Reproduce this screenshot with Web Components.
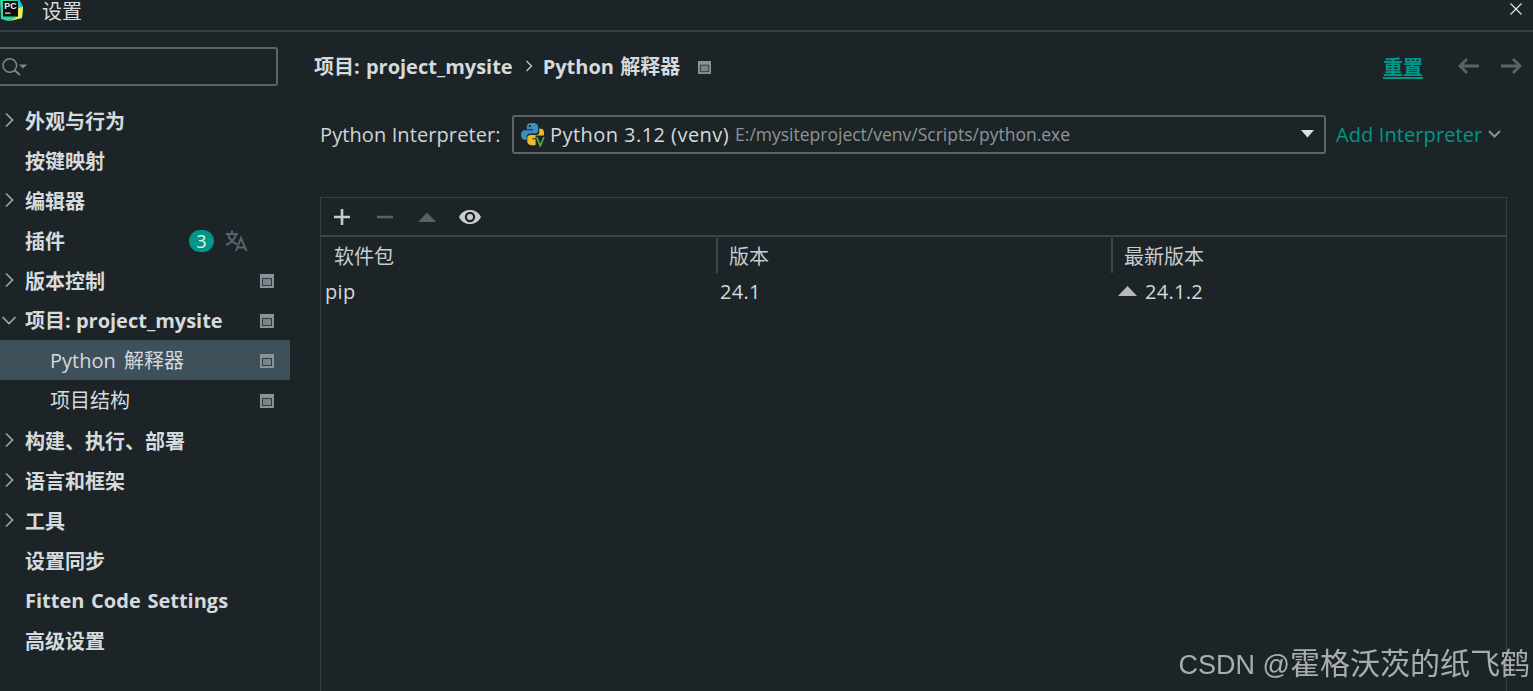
<!DOCTYPE html>
<html lang="zh">
<head>
<meta charset="utf-8">
<title>设置</title>
<style>
  html, body { margin: 0; height: 100%; background: #1c2428; overflow: hidden; }
  body { font: 20px "Open Sans", "Noto Sans CJK SC", sans-serif; color: #d4d8da; }
</style>
</head>
<body>
<settings-window>
  <title-bar slot="title">设置</title-bar>
  <side-nav slot="nav">
    <search-box></search-box>
    <nav-item arrow="right" bold>外观与行为</nav-item>
    <nav-item bold>按键映射</nav-item>
    <nav-item arrow="right" bold>编辑器</nav-item>
    <nav-item bold badge="3" translate-icon>插件</nav-item>
    <nav-item arrow="right" bold scope>版本控制</nav-item>
    <nav-item arrow="down" bold scope latin>项目: project_mysite</nav-item>
    <nav-item child selected scope latin style="word-spacing:3px">Python 解释器</nav-item>
    <nav-item child scope latin>项目结构</nav-item>
    <nav-item arrow="right" bold>构建、执行、部署</nav-item>
    <nav-item arrow="right" bold>语言和框架</nav-item>
    <nav-item arrow="right" bold>工具</nav-item>
    <nav-item bold>设置同步</nav-item>
    <nav-item bold latin style="word-spacing:1.5px">Fitten Code Settings</nav-item>
    <nav-item bold>高级设置</nav-item>
  </side-nav>
  <interpreter-panel slot="main"></interpreter-panel>
</settings-window>
<water-mark><span style="font-size:27px">CSDN @</span>霍格沃茨的纸飞鹤</water-mark>

<script>
const SCOPE_ICON = `<svg width="14" height="14" viewBox="0 0 14 14"><rect x="0" y="0" width="14" height="14" fill="#8b9194"/><rect x="2" y="4" width="10" height="8" fill="#2f3b41"/><rect x="3" y="5" width="8" height="6" fill="#78858b"/></svg>`;

class SettingsWindow extends HTMLElement {
  constructor() {
    super();
    this.attachShadow({ mode: 'open' });
    this.shadowRoot.innerHTML = `
      <style>
        :host { display: flex; flex-direction: column; height: 691px; overflow: hidden; }
        .body { display: flex; flex: 1; min-height: 0; }
        ::slotted(side-nav) { flex: 0 0 290px; }
        ::slotted(interpreter-panel) { flex: 1; min-width: 0; }
      </style>
      <slot name="title"></slot>
      <div class="body"><slot name="nav"></slot><slot name="main"></slot></div>
    `;
  }
}

class TitleBar extends HTMLElement {
  constructor() {
    super();
    this.attachShadow({ mode: 'open' });
    this.shadowRoot.innerHTML = `
      <style>
        :host { display: flex; align-items: center; height: 30px; border-bottom: 2px solid #35444c; box-sizing: content-box; position: relative; }
        svg.logo { flex: none; }
        .name { margin-left: 19px; font: 20px/22px "Liberation Sans", "Noto Sans CJK SC", sans-serif; color: #d8dcde; position: relative; top: -3px; }
        svg.close { position: absolute; right: 10px; top: 2px; }
      </style>
      <svg class="logo" width="23" height="23" viewBox="0 0 23 23" style="margin-top:-9px">
        <path d="M0 1 L19 0 L23 8 L22 19 L8 22 L1 20 Z" fill="#2fd6a0"/>
        <path d="M10 22 L22 19 L23 8 L19 6 L17 18 Z" fill="#f2ea4e"/>
        <path d="M18 0 L23 8 L18 9 Z" fill="#21c3e6"/>
        <rect x="3" y="2" width="15" height="15.500" fill="#0b0d0e"/>
        <text x="4.300" y="10" font-family="Liberation Sans, sans-serif" font-weight="700" font-size="8.800" fill="#f2f2f2">PC</text>
        <rect x="5" y="13.500" width="5.500" height="1.300" fill="#d8d8d8"/>
      </svg>
      <span class="name"><slot></slot></span>
      <svg class="close" width="14" height="14" viewBox="0 0 14 14"><path d="M1.500 1.500 L12.500 12.500 M12.500 1.500 L1.500 12.500" stroke="#e8eaeb" stroke-width="1.100" fill="none"/></svg>
    `;
  }
}

class SideNav extends HTMLElement {
  constructor() {
    super();
    this.attachShadow({ mode: 'open' });
    this.shadowRoot.innerHTML = `
      <style>
        :host { display: flex; flex-direction: column; box-sizing: border-box; padding-top: 15px; }
      </style>
      <slot></slot>
    `;
  }
}

class SearchBox extends HTMLElement {
  constructor() {
    super();
    this.attachShadow({ mode: 'open' });
    this.shadowRoot.innerHTML = `
      <style>
        :host { display: flex; align-items: center; box-sizing: border-box; width: 281px; height: 39px; margin-bottom: 14px; margin-left: -3px; padding-left: 3px;
          border: 2px solid #5f6366; border-radius: 3px; }
      </style>
      <svg width="26" height="22" viewBox="0 0 26 22">
        <circle cx="7.800" cy="9.500" r="6.800" fill="none" stroke="#82888b" stroke-width="1.500"/>
        <path d="M12.800 14.500 L18 19" stroke="#82888b" stroke-width="1.800" fill="none"/>
        <path d="M17 8.500 L25 8.500 L21 12.500 Z" fill="#82888b"/>
      </svg>
    `;
  }
}

class NavItem extends HTMLElement {
  constructor() {
    super();
    this.attachShadow({ mode: 'open' });
  }

  connectedCallback() {
    const arrow = this.getAttribute('arrow');
    const badge = this.getAttribute('badge');
    let arrowSvg = '';
    if (arrow === 'right') arrowSvg = `<svg class="arrow" width="16" height="16" viewBox="0 0 16 16"><path d="M5 1.500 L11.500 8 L5 14.500" fill="none" stroke="#a2a7aa" stroke-width="1.700"/></svg>`;
    if (arrow === 'down') arrowSvg = `<svg class="arrow" width="16" height="16" viewBox="0 0 16 16"><path d="M1.500 5 L8 11.500 L14.500 5" fill="none" stroke="#a2a7aa" stroke-width="1.700"/></svg>`;
    this.shadowRoot.innerHTML = `
      <style>
        :host { display: flex; align-items: center; height: 40px; position: relative; flex: none; color: #d6dadc; }
        :host([selected]) { background: #3e505a; }
        .arrow { position: absolute; left: 1px; top: 12px; }
        .label { margin-left: 25px; white-space: nowrap; line-height: 24px; padding-top: 3px; }
        :host([latin]) .label { padding-top: 1px; }
        :host([bold]) .label { font-weight: 700; }
        :host([child]) .label { margin-left: 50px; }
        .badge { position: absolute; left: 189px; top: 10px; width: 25px; height: 22px; border-radius: 11px; background: #009688; color: #e9f3f2; font-size: 18px; line-height: 22px; text-align: center; }
        .tr { position: absolute; left: 225px; top: 10px; }
        .scope { position: absolute; left: 260px; top: 14px; display: flex; }
      </style>
      ${arrowSvg}
      <span class="label"><slot></slot></span>
      ${badge ? `<span class="badge">${badge}</span>` : ''}
      ${this.hasAttribute('translate-icon') ? `<svg class="tr" width="23" height="22" viewBox="0 0 23 22"><g fill="none" stroke="#59626a" stroke-width="2"><path d="M1 4 L13 4 M7 0.500 L7 4 M3 4 C4 9 8 13 12 14 M11 4 C10 9 6 13 1 15"/><path d="M11 21 L16 8 L21.500 21 M12.500 17.500 L20 17.500"/></g></svg>` : ''}
      ${this.hasAttribute('scope') ? `<span class="scope">${SCOPE_ICON}</span>` : ''}
    `;
  }
}

class InterpreterPanel extends HTMLElement {
  constructor() {
    super();
    this.attachShadow({ mode: 'open' });
    this.shadowRoot.innerHTML = `
      <style>
        :host { display: flex; flex-direction: column; box-sizing: border-box; padding-left: 24px; min-height: 0; }
        .crumbs { display: flex; align-items: center; height: 28px; margin-top: 20px; font-weight: 700; white-space: nowrap; color: #d6dadc; }
        .crumb { padding-bottom: 2px; word-spacing: 1px; }
        .sep { margin: 0 10px 0 12px; display: flex; }
        .scope { margin-left: 18px; display: flex; position: relative; top: 1px; }
        .scope svg { width: 13px; height: 13px; }
        .actions { margin-left: auto; display: flex; align-items: center; padding-right: 11px; }
        .reset { color: #009688; text-decoration: underline; text-underline-offset: 2px; margin-right: 35px; font-weight: 700; }
        .actions svg { display: block; }
        .nav-next { margin-left: 22px; }
        .row { display: flex; align-items: center; height: 40px; margin: 34px 0 0 6px; }
        .row .lbl { width: 192px; flex: none; white-space: nowrap; color: #d0d4d6; letter-spacing: .1px; }
        .combo { display: flex; align-items: center; box-sizing: border-box; width: 814px; height: 39px; border: 2px solid #5f6366; border-radius: 3px; padding-left: 7px; white-space: nowrap; }
        .combo .ver { margin-left: 5px; color: #d6dadc; letter-spacing: .45px; }
        .combo .path { margin-left: 6px; font-size: 17.500px; color: #8e9497; }
        .combo .drop { margin-left: auto; margin-right: 10px; }
        .add { display: flex; align-items: center; margin-left: 10px; color: #009688; white-space: nowrap; letter-spacing: .1px; }
        .add svg { margin-left: 6px; }
        package-table { margin: 43px 26px 0 6px; flex: 1; }
      </style>
      <div class="crumbs">
        <span class="crumb">项目: project_mysite</span>
        <span class="sep"><svg width="8" height="12" viewBox="0 0 8 12"><path d="M1.500 1 L6.500 6 L1.500 11" fill="none" stroke="#c4c8ca" stroke-width="1.300"/></svg></span>
        <span class="crumb">Python 解释器</span>
        <span class="scope">${SCOPE_ICON}</span>
        <span class="actions">
          <span class="reset">重置</span>
          <svg width="21" height="16" viewBox="0 0 21 16"><path d="M9 1 L2 8 L9 15 M2 8 L21 8" fill="none" stroke="#5e6366" stroke-width="2.800"/></svg>
          <svg class="nav-next" width="21" height="16" viewBox="0 0 21 16"><path d="M12 1 L19 8 L12 15 M19 8 L0 8" fill="none" stroke="#5e6366" stroke-width="2.800"/></svg>
        </span>
      </div>
      <div class="row">
        <span class="lbl">Python Interpreter:</span>
        <div class="combo">
          <svg width="24" height="25" viewBox="0 0 23 24">
            <path d="M11 1 C6 1 5.500 3 5.500 5 L5.500 7 L11.500 7 L11.500 8 L3.500 8 C1 8 0 10 0 12.500 C0 15 1 17 3.500 17 L5.500 17 L5.500 14 C5.500 12 7 11 9 11 L14 11 C15.500 11 16.500 10 16.500 8 L16.500 5 C16.500 3 15 1 11 1 Z" fill="#3d8fbd"/>
            <path d="M11.500 22.500 C16.500 22.500 17 20.500 17 18.500 L17 16.500 L11 16.500 L11 15.500 L19 15.500 C21.500 15.500 22 13.500 22 11 C22 8.500 21.500 6.500 19 6.500 L17.500 6.500 L17.500 10 C17.500 11.500 16 12.500 14 12.500 L9 12.500 C7.500 12.500 6 13.500 6 15.500 L6 18.500 C6 20.500 7.500 22.500 11.500 22.500 Z" fill="#f0b92c"/>
            <circle cx="8.500" cy="4" r="1.100" fill="#1c2428"/>
            <rect x="14" y="13" width="9" height="11" fill="#1c2428"/>
            <path d="M15 14.500 L18.500 23 L22 14.500" fill="none" stroke="#4fa83d" stroke-width="1.700"/>
          </svg>
          <span class="ver">Python 3.12 (venv)</span>
          <span class="path">E:/mysiteproject/venv/Scripts/python.exe</span>
          <svg class="drop" width="13" height="8" viewBox="0 0 13 8"><path d="M0 0 L13 0 L6.500 7.500 Z" fill="#dfe2e3"/></svg>
        </div>
        <span class="add">Add Interpreter<svg width="13" height="8" viewBox="0 0 13 8"><path d="M1 1 L6.500 6.500 L12 1" fill="none" stroke="#8b9194" stroke-width="2"/></svg></span>
      </div>
      <package-table></package-table>
    `;
  }
}

class PackageTable extends HTMLElement {
  constructor() {
    super();
    this.attachShadow({ mode: 'open' });
    this.shadowRoot.innerHTML = `
      <style>
        :host { display: block; box-sizing: border-box; border: solid #3a3f42; border-width: 1px 1px 0 1px; }
        .tools { display: flex; align-items: center; height: 37px; gap: 25px; padding-left: 12px; border-bottom: 2px solid #3f4447; }
        .tools svg { display: block; flex: none; }
        .tools .up { margin-left: -2px; }
        .tools .eye { margin-left: -4px; }
        .head, .line { display: grid; grid-template-columns: 395px 395px 1fr; }
        .head { height: 35px; padding-top: 1px; align-items: stretch; }
        .head span { display: flex; align-items: center; padding-left: 13px; color: #c8ccce; font-size: 20px; line-height: 24px; padding-top: 2px; }
        .head span + span { border-left: 2px solid #3f4447; padding-left: 11px; }
        .line { height: 36px; align-items: center; color: #d4d8da; letter-spacing: .3px; }
        .line span { padding-left: 4px; }
        .line .latest { display: flex; align-items: center; padding-left: 7px; }
        .line .latest svg { margin-right: 8px; }
      </style>
      <div class="tools">
        <svg width="18" height="18" viewBox="0 0 18 18"><path d="M9 1 L9 17 M1 9 L17 9" stroke="#c8ccce" stroke-width="2.600"/></svg>
        <svg width="18" height="18" viewBox="0 0 18 18"><path d="M1 9 L17 9" stroke="#5b6063" stroke-width="2.600"/></svg>
        <svg class="up" width="20" height="18" viewBox="0 0 20 18"><path d="M1 14 L19 14 L10 4.500 Z" fill="#5b6063"/></svg>
        <svg class="eye" width="24" height="18" viewBox="0 0 24 18"><path fill-rule="evenodd" d="M1 9 C4 3.500 8 2 12 2 C16 2 20 3.500 23 9 C20 14.500 16 16 12 16 C8 16 4 14.500 1 9 Z M12 3.800 A5.200 5.200 0 1 0 12 14.200 A5.200 5.200 0 1 0 12 3.800 Z" fill="#c8ccce"/><circle cx="12" cy="9" r="3" fill="#c8ccce"/></svg>
      </div>
      <div class="head"><span>软件包</span><span>版本</span><span>最新版本</span></div>
      <div class="line">
        <span>pip</span>
        <span>24.1</span>
        <span class="latest"><svg width="19" height="10" viewBox="0 0 19 10"><path d="M0 10 L19 10 L9.500 0 Z" fill="#b6babc"/></svg>24.1.2</span>
      </div>
    `;
  }
}

class WaterMark extends HTMLElement {
  constructor() {
    super();
    this.attachShadow({ mode: 'open' });
    this.shadowRoot.innerHTML = `
      <style>
        :host { display: block; position: fixed; right: 3px; top: 644px; font: 30px/40px "Liberation Sans", "Noto Sans CJK SC", sans-serif; color: rgba(222,226,228,.72); white-space: nowrap; }
      </style>
      <slot></slot>
    `;
  }
}

customElements.define('settings-window', SettingsWindow);
customElements.define('title-bar', TitleBar);
customElements.define('side-nav', SideNav);
customElements.define('search-box', SearchBox);
customElements.define('nav-item', NavItem);
customElements.define('interpreter-panel', InterpreterPanel);
customElements.define('package-table', PackageTable);
customElements.define('water-mark', WaterMark);
</script>
</body>
</html>
